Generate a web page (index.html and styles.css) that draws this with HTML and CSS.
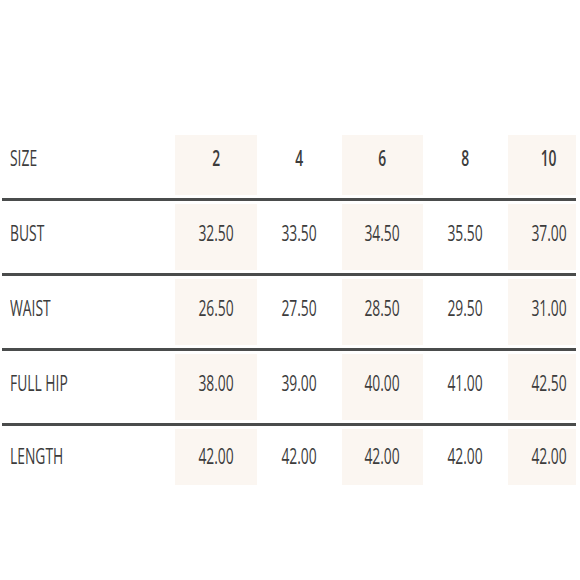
FILE: index.html
```html
<!DOCTYPE html>
<html>
<head>
<meta charset="utf-8">
<link rel="stylesheet" href="styles.css">
</head>
<body>
<div class="table">
  <div class="row head">
    <div class="cell label"><span class="t">SIZE</span></div>
    <div class="cell c1 shade"><span class="t">2</span></div>
    <div class="cell c2"><span class="t">4</span></div>
    <div class="cell c3 shade"><span class="t">6</span></div>
    <div class="cell c4"><span class="t">8</span></div>
    <div class="cell c5 shade"><span class="t">10</span></div>
  </div>
  <div class="sep"></div>
  <div class="row">
    <div class="cell label"><span class="t">BUST</span></div>
    <div class="cell c1 shade"><span class="t">32.50</span></div>
    <div class="cell c2"><span class="t">33.50</span></div>
    <div class="cell c3 shade"><span class="t">34.50</span></div>
    <div class="cell c4"><span class="t">35.50</span></div>
    <div class="cell c5 shade"><span class="t">37.00</span></div>
  </div>
  <div class="sep"></div>
  <div class="row">
    <div class="cell label"><span class="t">WAIST</span></div>
    <div class="cell c1 shade"><span class="t">26.50</span></div>
    <div class="cell c2"><span class="t">27.50</span></div>
    <div class="cell c3 shade"><span class="t">28.50</span></div>
    <div class="cell c4"><span class="t">29.50</span></div>
    <div class="cell c5 shade"><span class="t">31.00</span></div>
  </div>
  <div class="sep"></div>
  <div class="row">
    <div class="cell label"><span class="t">FULL HIP</span></div>
    <div class="cell c1 shade"><span class="t">38.00</span></div>
    <div class="cell c2"><span class="t">39.00</span></div>
    <div class="cell c3 shade"><span class="t">40.00</span></div>
    <div class="cell c4"><span class="t">41.00</span></div>
    <div class="cell c5 shade"><span class="t">42.50</span></div>
  </div>
  <div class="sep"></div>
  <div class="row last">
    <div class="cell label"><span class="t">LENGTH</span></div>
    <div class="cell c1 shade"><span class="t">42.00</span></div>
    <div class="cell c2"><span class="t">42.00</span></div>
    <div class="cell c3 shade"><span class="t">42.00</span></div>
    <div class="cell c4"><span class="t">42.00</span></div>
    <div class="cell c5 shade"><span class="t">42.00</span></div>
  </div>
</div>
</body>
</html>
```
FILE: styles.css
```css
body {
  margin: 0;
  background: #fff;
  font-family: "Open Sans", sans-serif;
  color: #3c3c3c;
}
.table {
  padding-top: 135px;
  width: 576px;
}
.row {
  display: flex;
  height: 66px;
}
.row.head {
  height: 60px;
}
.row.last {
  height: 56px;
}
.cell {
  display: flex;
  align-items: center;
  justify-content: center;
  padding-bottom: 10px;
  box-sizing: border-box;
}
.head .cell {
  padding-bottom: 16px;
}
.last .cell {
  padding-bottom: 5px;
}
.label {
  width: 175px;
  justify-content: flex-start;
  padding-left: 10px;
}
.c1 { width: 82px; }
.c2 { width: 85px; }
.c3 { width: 81px; }
.c4 { width: 85px; }
.c5 { width: 68px; padding-left: 14px; }
.shade {
  background: #fbf6f1;
}
.sep {
  height: 3px;
  margin: 3px 0 3px 2px;
  background: #4a4c4c;
}
.t {
  display: inline-block;
  font-size: 22px;
  line-height: 1;
  transform: scaleX(0.63);
}
.label .t {
  transform-origin: left center;
}
.head .shade .t, .head .c2 .t, .head .c4 .t {
  font-weight: 600;
}
```
